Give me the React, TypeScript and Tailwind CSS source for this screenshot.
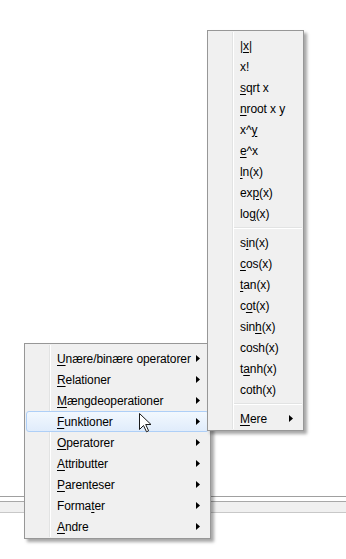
import React from 'react'

type Entry = { pre?: string; key?: string; post?: string; arrow?: boolean; active?: boolean } | 'sep'

const MAIN: Entry[] = [
  { key: 'U', post: 'nære/binære operatorer', arrow: true },
  { key: 'R', post: 'elationer', arrow: true },
  { key: 'M', post: 'ængdeoperationer', arrow: true },
  { key: 'F', post: 'unktioner', arrow: true, active: true },
  { key: 'O', post: 'peratorer', arrow: true },
  { key: 'A', post: 'ttributter', arrow: true },
  { key: 'P', post: 'arenteser', arrow: true },
  { pre: 'Forma', key: 't', post: 'er', arrow: true },
  { key: 'A', post: 'ndre', arrow: true },
]

const FUNCS: Entry[] = [
  { pre: '|', key: 'x', post: '|' },
  { pre: 'x!' },
  { key: 's', post: 'qrt x' },
  { key: 'n', post: 'root x y' },
  { pre: 'x^', key: 'y' },
  { key: 'e', post: '^x' },
  { key: 'l', post: 'n(x)' },
  { pre: 'ex', key: 'p', post: '(x)' },
  { pre: 'lo', key: 'g', post: '(x)' },
  'sep',
  { pre: 's', key: 'i', post: 'n(x)' },
  { key: 'c', post: 'os(x)' },
  { key: 't', post: 'an(x)' },
  { pre: 'c', key: 'o', post: 't(x)' },
  { pre: 'sin', key: 'h', post: '(x)' },
  { pre: 'cosh(x)' },
  { pre: 't', key: 'a', post: 'nh(x)' },
  { pre: 'coth(x)' },
  'sep',
  { key: 'M', post: 'ere', arrow: true },
]

function Arrow() {
  return (
    <svg width="4" height="7" viewBox="0 0 4 7" className="block">
      <path d="M0 0 L4 3.5 L0 7 Z" fill="#000" />
    </svg>
  )
}

function Menu({ items, className }: { items: Entry[]; className: string }) {
  return (
    <div
      className={`absolute border border-[#979797] bg-[#f0f0f0] pt-[4px] pb-[1px] shadow-[3px_3px_3px_rgba(0,0,0,0.35)] ${className}`}
    >
      {/* gutter line */}
      <div className="absolute top-[1px] bottom-[1px] left-[24px] w-[2px] border-l border-l-[#e2e3e3] border-r border-r-white" />
      {items.map((it, i) =>
        it === 'sep' ? (
          <div key={i} className="relative flex h-[8px] items-center pl-[26px] pr-[1px]">
            <div className="h-[2px] w-full border-t border-t-[#e2e3e3] border-b border-b-white" />
          </div>
        ) : (
          <div key={i} className="relative h-[21px] px-[2px]">
            {it.active && (
              <div className="absolute inset-y-0 left-[1px] right-[1px] rounded-[3px] border border-[#aecff7] bg-gradient-to-b from-[#f2f8fe] to-[#e0ecfb]" />
            )}
            <div className="relative flex h-full items-center pl-[30px] pr-[8px]">
              <span className="flex-1 whitespace-nowrap text-[12px] tracking-[-0.1px] text-black">
                {it.pre}
                {it.key && <u className="underline-offset-[2px]">{it.key}</u>}
                {it.post}
              </span>
              {it.arrow && <Arrow />}
            </div>
          </div>
        ),
      )}
    </div>
  )
}

function Cursor() {
  return (
    <svg width="13" height="20" viewBox="0 0 13 20" className="absolute left-[139px] top-[413px]">
      <path
        d="M0.5 0.5 L0.5 16.5 L4.5 12.5 L7.5 18.8 L9.6 17.8 L6.7 11.5 L12 11.5 Z"
        fill="#fff"
        stroke="#1a1a1a"
        strokeWidth="1"
        strokeLinejoin="miter"
      />
    </svg>
  )
}

export default function App() {
  return (
    <div
      className="relative h-[559px] w-[346px] overflow-hidden bg-white"
      style={{ fontFamily: '"Liberation Sans", Arial, sans-serif' }}
    >
      <div className="h-[496px]" />
      <div className="h-px bg-[#a0a0a0]" />
      <div className="h-[4px]" />
      <div className="h-[12px] border-y border-t-[#a8a8a8] border-b-[#c8c8c8] bg-[#f0f0f0]" />

      <Menu items={MAIN} className="left-[24px] top-[343px] w-[187px]" />
      <Menu items={FUNCS} className="left-[207px] top-[30px] w-[97px]" />
      <Cursor />
    </div>
  )
}
